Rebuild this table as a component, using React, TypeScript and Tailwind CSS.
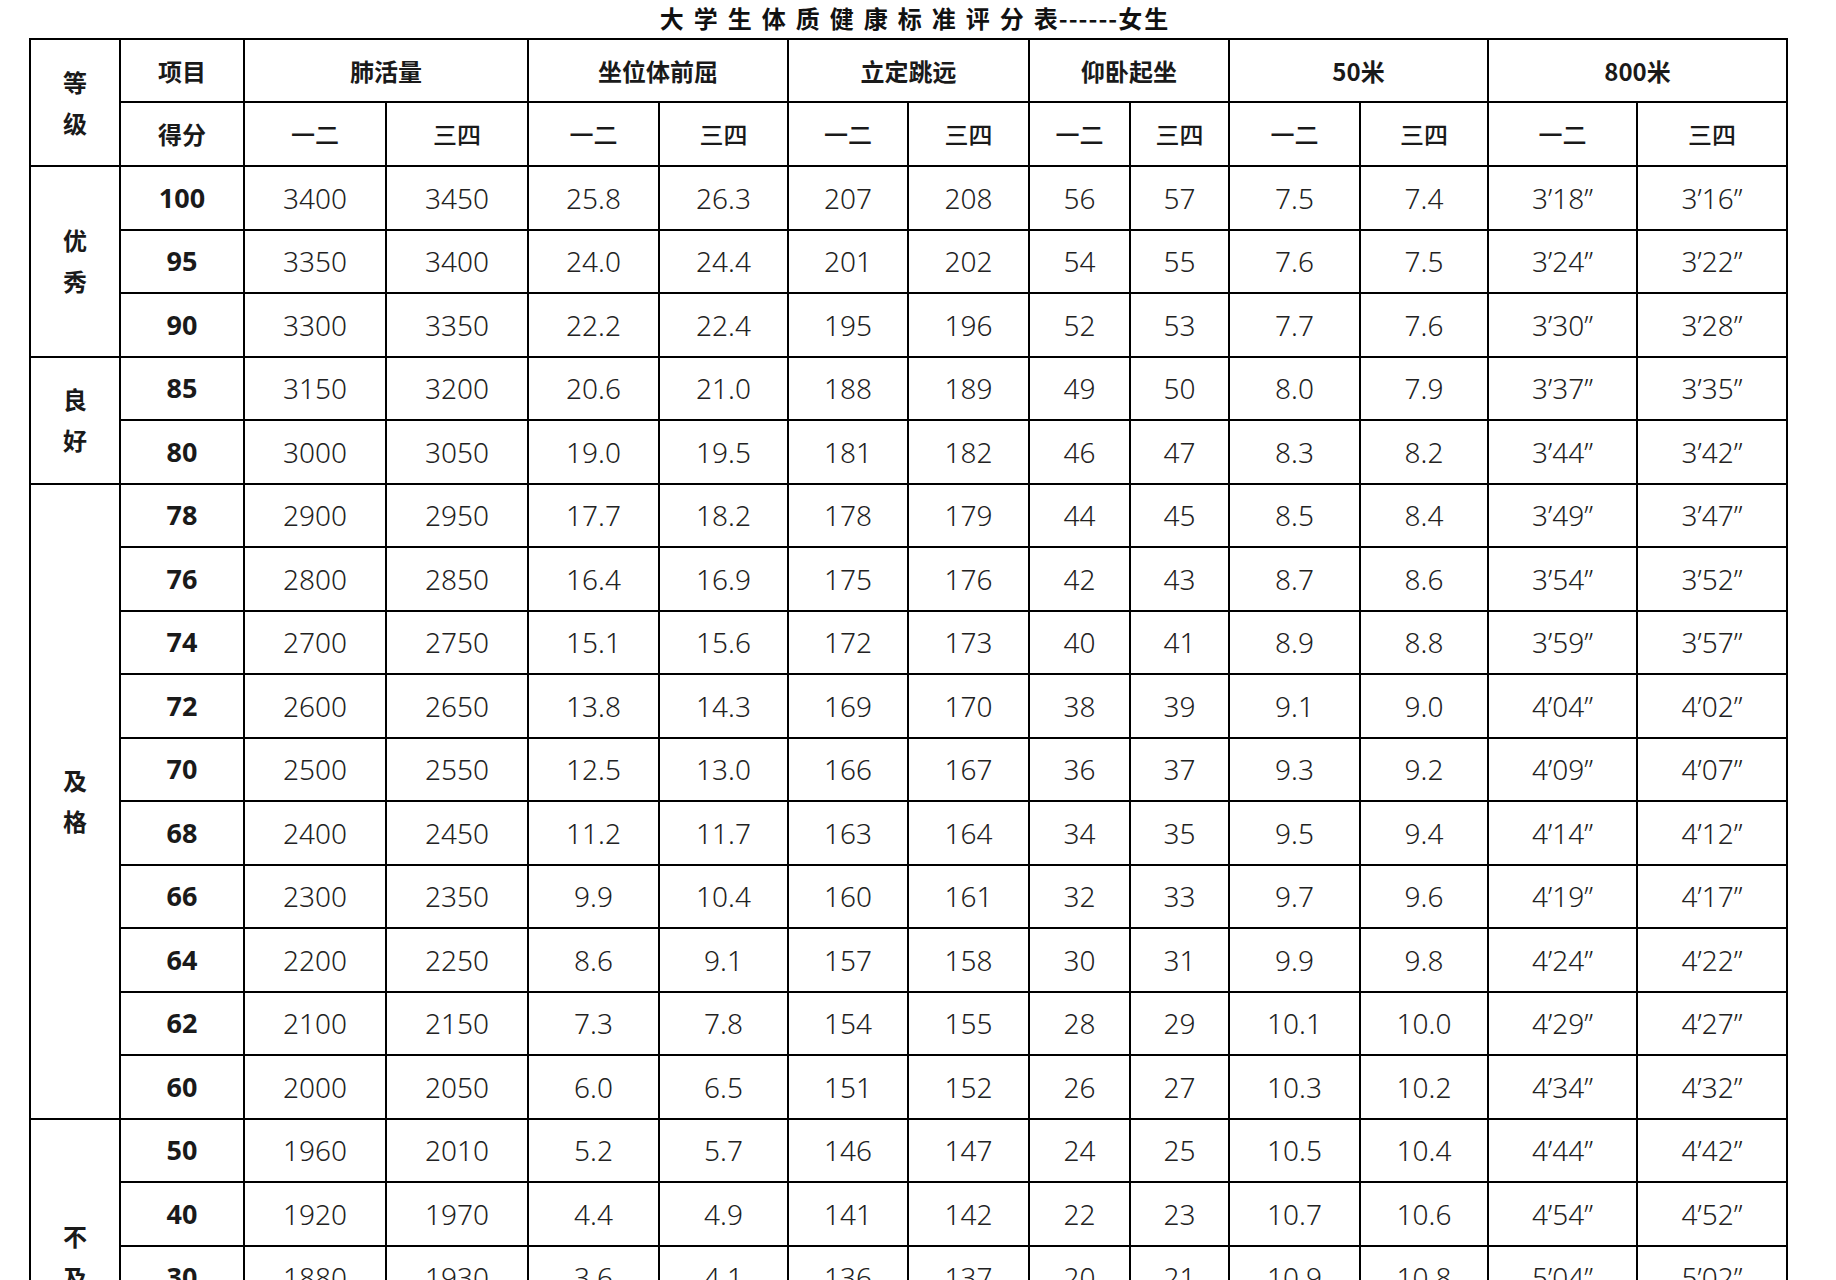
import React from "react";

// column widths in px, left to right (等级, 得分, then the 12 value columns)
const colWidths = [90, 124, 142, 142, 131, 129, 120, 121, 101, 99, 131, 128, 149, 150];

const events = ["肺活量", "坐位体前屈", "立定跳远", "仰卧起坐", "50米", "800米"];

// score followed by 12 values: 一二 / 三四 for each event
const rows: string[][] = [
  ["100", "3400", "3450", "25.8", "26.3", "207", "208", "56", "57", "7.5", "7.4", "3’18”", "3’16”"],
  ["95", "3350", "3400", "24.0", "24.4", "201", "202", "54", "55", "7.6", "7.5", "3’24”", "3’22”"],
  ["90", "3300", "3350", "22.2", "22.4", "195", "196", "52", "53", "7.7", "7.6", "3’30”", "3’28”"],
  ["85", "3150", "3200", "20.6", "21.0", "188", "189", "49", "50", "8.0", "7.9", "3’37”", "3’35”"],
  ["80", "3000", "3050", "19.0", "19.5", "181", "182", "46", "47", "8.3", "8.2", "3’44”", "3’42”"],
  ["78", "2900", "2950", "17.7", "18.2", "178", "179", "44", "45", "8.5", "8.4", "3’49”", "3’47”"],
  ["76", "2800", "2850", "16.4", "16.9", "175", "176", "42", "43", "8.7", "8.6", "3’54”", "3’52”"],
  ["74", "2700", "2750", "15.1", "15.6", "172", "173", "40", "41", "8.9", "8.8", "3’59”", "3’57”"],
  ["72", "2600", "2650", "13.8", "14.3", "169", "170", "38", "39", "9.1", "9.0", "4’04”", "4’02”"],
  ["70", "2500", "2550", "12.5", "13.0", "166", "167", "36", "37", "9.3", "9.2", "4’09”", "4’07”"],
  ["68", "2400", "2450", "11.2", "11.7", "163", "164", "34", "35", "9.5", "9.4", "4’14”", "4’12”"],
  ["66", "2300", "2350", "9.9", "10.4", "160", "161", "32", "33", "9.7", "9.6", "4’19”", "4’17”"],
  ["64", "2200", "2250", "8.6", "9.1", "157", "158", "30", "31", "9.9", "9.8", "4’24”", "4’22”"],
  ["62", "2100", "2150", "7.3", "7.8", "154", "155", "28", "29", "10.1", "10.0", "4’29”", "4’27”"],
  ["60", "2000", "2050", "6.0", "6.5", "151", "152", "26", "27", "10.3", "10.2", "4’34”", "4’32”"],
  ["50", "1960", "2010", "5.2", "5.7", "146", "147", "24", "25", "10.5", "10.4", "4’44”", "4’42”"],
  ["40", "1920", "1970", "4.4", "4.9", "141", "142", "22", "23", "10.7", "10.6", "4’54”", "4’52”"],
  ["30", "1880", "1930", "3.6", "4.1", "136", "137", "20", "21", "10.9", "10.8", "5’04”", "5’02”"],
  ["20", "1840", "1890", "2.8", "3.3", "131", "132", "18", "19", "11.1", "11.0", "5’14”", "5’12”"],
  ["10", "1800", "1850", "2.0", "2.5", "126", "127", "16", "17", "11.3", "11.2", "5’24”", "5’22”"],
];

// grade groups: label chars + how many rows they span
const grades = [
  { label: ["优", "秀"], span: 3 },
  { label: ["良", "好"], span: 2 },
  { label: ["及", "格"], span: 10 },
  { label: ["不", "及", "格"], span: 5 },
];

const cell = "border-2 border-black text-center align-middle p-0";

function Stacked({ chars }: { chars: string[] }) {
  return (
    <div className="flex flex-col items-center leading-[41px] text-[24px] font-bold">
      {chars.map((c, i) => (
        <span key={i}>{c}</span>
      ))}
    </div>
  );
}

export default function App() {
  // which data row starts a grade group
  const groupStarts: Record<number, (typeof grades)[number]> = {};
  let idx = 0;
  for (const g of grades) {
    groupStarts[idx] = g;
    idx += g.span;
  }

  return (
    <div className="h-[1280px] overflow-hidden bg-white text-[#1a1a1a] font-['Noto_Sans','Noto_Sans_CJK_SC',sans-serif]">
      {/* title */}
      <div className="h-[39px] flex items-center justify-center pb-[3px] pr-[6px]">
        <span className="font-['Noto_Sans_CJK_SC',sans-serif] font-bold text-[24px] leading-none text-[#111]">
          <span className="tracking-[10px]">大学生体质健康标准评分</span>
          <span className="tracking-[1px]">表------</span>
          <span className="tracking-[2px]">女生</span>
        </span>
      </div>

      <table className="ml-[29px] -mt-[1px] table-fixed border-collapse border-2 border-black w-[1759px]">
        <colgroup>
          {colWidths.map((w, i) => (
            <col key={i} style={{ width: w }} />
          ))}
        </colgroup>
        <thead>
          <tr className="h-[63px]">
            <td rowSpan={2} className={cell}>
              <Stacked chars={["等", "级"]} />
            </td>
            <td className={`${cell} font-['Noto_Sans_CJK_SC',sans-serif] font-bold text-[24px]`}>项目</td>
            {events.map((e) => (
              <td
                key={e}
                colSpan={2}
                className={`${cell} font-['Noto_Sans_CJK_SC',sans-serif] font-bold text-[24px]`}
              >
                {e}
              </td>
            ))}
          </tr>
          <tr className="h-[64px]">
            <td className={`${cell} font-['Noto_Sans_CJK_SC',sans-serif] font-bold text-[24px]`}>得分</td>
            {events.map((e) => (
              <React.Fragment key={e}>
                <td className={`${cell} font-['Noto_Sans_CJK_SC',sans-serif] font-medium text-[24px]`}>一二</td>
                <td className={`${cell} font-['Noto_Sans_CJK_SC',sans-serif] font-medium text-[24px]`}>三四</td>
              </React.Fragment>
            ))}
          </tr>
        </thead>
        <tbody>
          {rows.map((r, i) => {
            const g = groupStarts[i];
            return (
              <tr key={r[0]} className="h-[63.5px]">
                {g && (
                  <td rowSpan={g.span} className={cell}>
                    <Stacked chars={g.label} />
                  </td>
                )}
                <td className={`${cell} font-bold text-[27px]`}>{r[0]}</td>
                {r.slice(1).map((v, j) => (
                  <td key={j} className={`${cell} font-light text-[28px] text-[#222]`}>
                    {v}
                  </td>
                ))}
              </tr>
            );
          })}
        </tbody>
      </table>
    </div>
  );
}
